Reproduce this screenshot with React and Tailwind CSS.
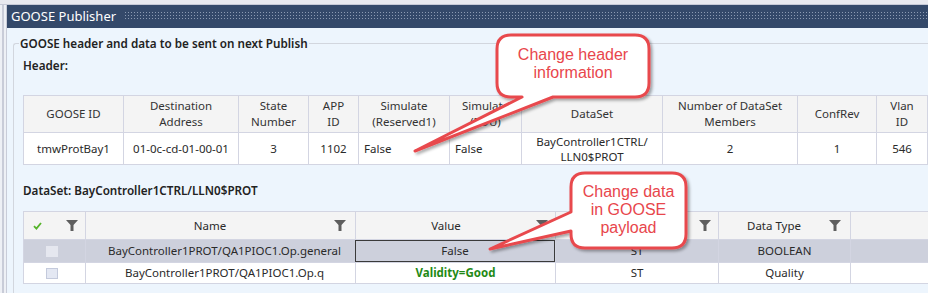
import React from 'react';

const HEAD_COLS = [
  { w: 100, title: ['GOOSE ID'], value: 'tmwProtBay1' },
  { w: 115, title: ['Destination', 'Address'], value: '01-0c-cd-01-00-01' },
  { w: 70, title: ['State', 'Number'], value: '3' },
  { w: 50, title: ['APP', 'ID'], value: '1102' },
  { w: 91, title: ['Simulate', '(Reserved1)'], value: 'False', left: true },
  { w: 72, title: ['Simulate', '(PDU)'], value: 'False', left: true },
  { w: 141, title: ['DataSet'], value: ['BayController1CTRL/', 'LLN0$PROT'] },
  { w: 135, title: ['Number of DataSet', 'Members'], value: '2' },
  { w: 79, title: ['ConfRev'], value: '1' },
  { w: 51, title: ['Vlan', 'ID'], value: '546' },
  { w: 90, title: [''], value: '' },
];

const DATA_ROWS = [
  { name: 'BayController1PROT/QA1PIOC1.Op.general', value: 'False', fc: 'ST', type: 'BOOLEAN', selected: true },
  { name: 'BayController1PROT/QA1PIOC1.Op.q', value: 'Validity=Good', fc: 'ST', type: 'Quality', good: true },
];

function Funnel() {
  return (
    <svg width="12" height="11" viewBox="0 0 12 11" className="shrink-0">
      <path d="M0 0H12L7.5 5V11H4.5V5Z" fill="#5e5e5e" />
    </svg>
  );
}

function Lines({ items }) {
  return items.map((t, i) => <div key={i}>{t}</div>);
}

export default function App() {
  return (
    <div className="relative w-[928px] h-[293px] overflow-hidden bg-[#edf5fd] font-['Noto_Sans',sans-serif] text-[11.5px] text-[#2a2a2a] flex flex-col">
      {/* top strip */}
      <div className="h-[5px] shrink-0 bg-[#e8e9ef] border-b border-[#c6c9d6]" />

      <div className="flex flex-1 min-h-0">
        {/* left gutter */}
        <div className="w-[7px] shrink-0 flex">
          <div className="w-[2px] bg-[#eef0f5]" />
          <div className="w-[2px] bg-[#c9ccd8]" />
          <div className="w-[2px] bg-[#eef0f5]" />
          <div className="w-[1px] bg-[#c9ccd8]" />
        </div>

        <div className="flex-1 min-w-0 flex flex-col">
          {/* title bar */}
          <div className="h-[23px] shrink-0 bg-[#34496a] flex items-center pl-[4px]">
            <span className="text-white text-[13px] leading-none">GOOSE Publisher</span>
            <svg className="flex-1 ml-[9px] h-[9px]" height="9">
              <defs>
                <pattern id="dots" width="3" height="3" patternUnits="userSpaceOnUse">
                  <rect x="0" y="0" width="1" height="1" fill="#8c9bb3" />
                </pattern>
              </defs>
              <rect x="0" y="0" width="100%" height="9" fill="url(#dots)" />
            </svg>
          </div>

          {/* group box */}
          <div className="ml-[6px] mt-[15px] flex-1 border-l border-t border-[#d2d6de] rounded-tl-[3px] pl-[9px]">
            <div className="-mt-[9px] -ml-[4px] h-[17px] leading-[17px]">
              <span className="bg-[#edf5fd] px-[1px] font-semibold text-[11.7px] text-[#222]">
                GOOSE header and data to be sent on next Publish
              </span>
            </div>

            <div className="mt-[5px] h-[16px] leading-[16px] font-semibold text-[11.7px] text-[#222]">Header:</div>

            {/* header table */}
            <div className="mt-[22px] flex border-t border-l border-[#d3d5e2] w-max">
              {HEAD_COLS.map((c, i) => (
                <div key={i} className="flex flex-col shrink-0" style={{ width: c.w }}>
                  <div className="h-[37px] bg-[#f4f4f4] border-r border-b border-[#d3d5e2] flex flex-col items-center justify-center text-center leading-[16px] text-[#333]">
                    <Lines items={c.title} />
                  </div>
                  <div
                    className={
                      'h-[32px] bg-white border-r border-b border-[#d3d5e2] flex flex-col justify-center leading-[15px] ' +
                      (c.left ? 'items-start pl-[5px]' : 'items-center text-center')
                    }
                  >
                    {Array.isArray(c.value) ? <Lines items={c.value} /> : c.value}
                  </div>
                </div>
              ))}
            </div>

            <div className="mt-[17px] h-[16px] leading-[16px] font-semibold text-[11.7px] text-[#222]">
              DataSet: BayController1CTRL/LLN0$PROT
            </div>

            {/* dataset table */}
            <div className="mt-[13px] border-t border-l border-[#d3d5e2] w-[920px]">
              <div className="h-[28px] flex bg-[#f4f4f4]">
                <div className="w-[62px] shrink-0 border-r border-b border-[#d3d5e2] flex items-center pl-[9px] pr-[7px] justify-between">
                  <svg width="9" height="8" viewBox="0 0 9 8">
                    <path d="M1 4.2L3.4 6.6L8 1" fill="none" stroke="#56b42a" strokeWidth="1.8" />
                  </svg>
                  <Funnel />
                </div>
                <div className="w-[270px] shrink-0 border-r border-b border-[#d3d5e2] flex items-center pr-[9px]">
                  <span className="flex-1 text-center">Name</span>
                  <Funnel />
                </div>
                <div className="w-[200px] shrink-0 border-r border-b border-[#d3d5e2] flex items-center pr-[7px]">
                  <span className="flex-1 text-center">Value</span>
                  <Funnel />
                </div>
                <div className="w-[163px] shrink-0 border-r border-b border-[#d3d5e2] flex items-center justify-end pr-[7px]">
                  <Funnel />
                </div>
                <div className="w-[132px] shrink-0 border-r border-b border-[#d3d5e2] flex items-center pr-[9px]">
                  <span className="flex-1 text-center">Data Type</span>
                  <Funnel />
                </div>
                <div className="flex-1 border-b border-[#d3d5e2]" />
              </div>

              {DATA_ROWS.map((r, i) => (
                <div
                  key={i}
                  className={
                    'flex ' + (r.selected ? 'h-[23px] bg-[#cdd0dc]' : 'h-[21px] bg-white')
                  }
                >
                  <div className="w-[62px] shrink-0 border-r border-b border-[#d3d5e2] flex items-center justify-center pr-[6px]">
                    <div
                      className={
                        'w-[12px] h-[11px] ' +
                        (r.selected ? 'bg-[#e5e7ef]' : 'bg-[#e4e8f3] border border-[#c4cadc]')
                      }
                    />
                  </div>
                  <div className="w-[270px] shrink-0 border-r border-b border-[#d3d5e2] flex items-center justify-center pl-[8px]">
                    {r.name}
                  </div>
                  <div className="w-[200px] shrink-0 border-r border-b border-[#d3d5e2] flex items-stretch">
                    {r.selected ? (
                      <div className="flex-1 border border-[#3a3a3a] flex items-center justify-center -ml-[1px]">
                        {r.value}
                      </div>
                    ) : (
                      <div className="flex-1 flex items-center justify-center font-bold text-[#1f8a16]">
                        {r.value}
                      </div>
                    )}
                  </div>
                  <div className="w-[163px] shrink-0 border-r border-b border-[#d3d5e2] flex items-center justify-center">
                    {r.fc}
                  </div>
                  <div className="w-[132px] shrink-0 border-r border-b border-[#d3d5e2] flex items-center justify-center">
                    {r.type}
                  </div>
                  <div className="flex-1 border-b border-[#d3d5e2]" />
                </div>
              ))}
            </div>
          </div>
        </div>
      </div>

      {/* callouts */}
      <svg className="absolute inset-0 pointer-events-none" width="928" height="293">
        <defs>
          <filter id="shadow" x="-20%" y="-20%" width="140%" height="140%">
            <feDropShadow dx="2" dy="2" stdDeviation="1.6" floodColor="#000" floodOpacity="0.35" />
          </filter>
        </defs>
        <path
          d="M511 35H635Q649 35 649 49V83Q649 97 635 97H553L415 151L522 97H511Q497 97 497 83V49Q497 35 511 35Z"
          fill="#fff"
          stroke="#e8494d"
          strokeWidth="3"
          strokeLinejoin="round"
          filter="url(#shadow)"
        />
        <path
          d="M585 173H672Q686 173 686 187V234Q686 248 672 248H585Q571 248 571 234V231L490 249L571 212V187Q571 173 585 173Z"
          fill="#fff"
          stroke="#e8494d"
          strokeWidth="3"
          strokeLinejoin="round"
          filter="url(#shadow)"
        />
      </svg>
      <div className="absolute left-[497px] top-[46px] w-[152px] text-center font-['Liberation_Sans',Arial,sans-serif] text-[16px] leading-[18px] text-[#e8464c]">
        Change header
        <br />
        information
      </div>
      <div className="absolute left-[571px] top-[183px] w-[115px] text-center font-['Liberation_Sans',Arial,sans-serif] text-[16px] leading-[18px] text-[#e8464c]">
        Change data
        <br />
        in GOOSE
        <br />
        payload
      </div>
    </div>
  );
}
